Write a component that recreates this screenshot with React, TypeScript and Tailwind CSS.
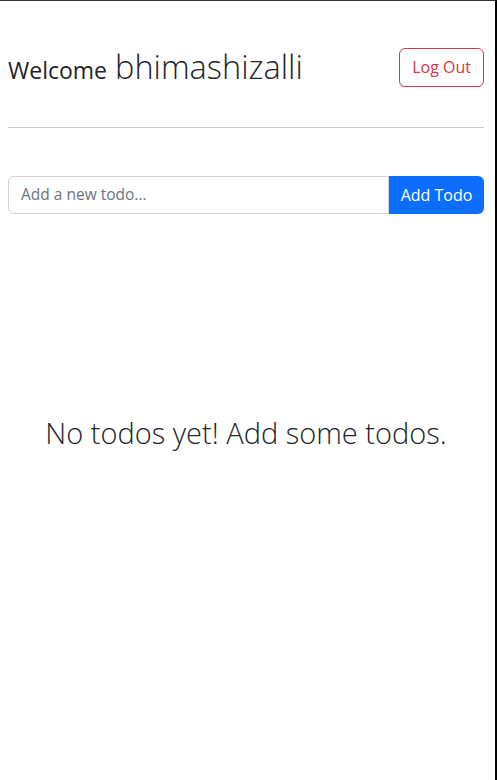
import { useState } from 'react';

export default function App() {
  const [todo, setTodo] = useState('');

  return (
    <div
      className="w-[497px] h-[780px] border-t border-t-[#333] border-r-2 border-r-black bg-white text-[#212529]"
      style={{ fontFamily: '"Open Sans", Lato, sans-serif' }}
    >
      <div className="pl-2 pr-[11px]">
        {/* header */}
        <div className="flex items-center justify-between pt-[42px]">
          <h1 className="flex items-baseline gap-[8px]">
            <span className="text-[23px] font-medium">Welcome</span>
            <span className="text-[32.5px] font-light">bhimashizalli</span>
          </h1>
          <button className="h-[39px] px-3 rounded-md border border-[#dc3545] text-[#dc3545] text-base">
            Log Out
          </button>
        </div>

        <hr className="mt-[35px] border-t border-[#c8c8c8]" />

        {/* new todo */}
        <div className="flex mt-[48px] h-[38px]">
          <input
            value={todo}
            onChange={(e) => setTodo(e.target.value)}
            placeholder="Add a new todo..."
            className="flex-1 min-w-0 px-3 rounded-l-md border border-[#ced4da] text-[15.5px] placeholder:text-[#6c757d] outline-none"
          />
          <button className="w-[95px] rounded-r-md bg-[#0d6efd] text-white text-base">
            Add Todo
          </button>
        </div>

        {/* empty list */}
        <p className="mt-[197px] text-center text-[29px] font-light">
          No todos yet! Add some todos.
        </p>
      </div>
    </div>
  );
}
